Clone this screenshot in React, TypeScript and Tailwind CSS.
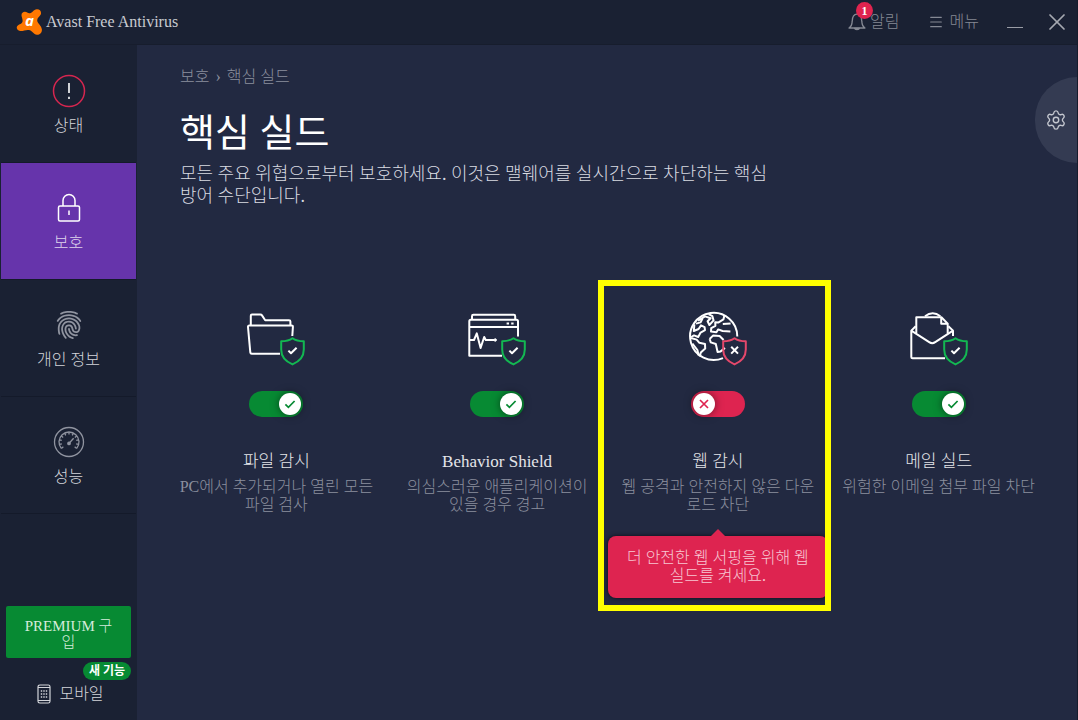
import { useState } from "react"
import type { ReactNode } from "react"
import { Menu, Settings, X } from "lucide-react"
import { IoFingerPrint } from "react-icons/io5"

type IconName = "folder" | "behavior" | "globe" | "mail"

const shields: { title: string; description: string; icon: IconName; on: boolean; alert?: string }[] = [
  { title: "파일 감시", description: "PC에서 추가되거나 열린 모든 파일 검사", icon: "folder", on: true },
  { title: "Behavior Shield", description: "의심스러운 애플리케이션이 있을 경우 경고", icon: "behavior", on: true },
  {
    title: "웹 감시",
    description: "웹 공격과 안전하지 않은 다운로드 차단",
    icon: "globe",
    on: false,
    alert: "더 안전한 웹 서핑을 위해 웹 실드를 켜세요.",
  },
  { title: "메일 실드", description: "위험한 이메일 첨부 파일 차단", icon: "mail", on: true },
]

function Logo() {
  return (
    <svg width="26" height="28" viewBox="0 0 26 28" aria-hidden="true">
      <path
        fill="#ff7800"
        d="M8.8 3.8C10.8 3.7 12 5.6 14 5.2C16.4 4.8 17.4 1.6 20.8 1.2C24 .9 26 4 24.6 6.8C23.6 8.8 21.3 9.6 21.2 12.2C21.1 15.4 25.6 17.6 25.9 21.6C26.1 24.8 23.6 27 20.9 26.8C17.4 26.5 16.6 22.6 12.8 22C9.4 21.6 6.5 23.6 3.4 22.8C.6 22-.1 18.9 1.8 17.4C3.6 16 5.6 16.2 6.4 14C7.2 11.6 5.4 9.2 5.5 6.9C5.6 5.1 7 3.9 8.8 3.8Z"
      />
      <text x="13.4" y="18" textAnchor="middle" fill="#fff" className="font-['Open_Sans'] text-[15px] font-bold italic">a</text>
    </svg>
  )
}

function Bell() {
  return (
    <svg width="18" height="18" viewBox="0 0 18 18" fill="none" stroke="currentColor" strokeWidth="1.3" aria-hidden="true">
      <path d="M1 15C3.4 13.6 4 12 4.2 8.4C4.3 4 6 1.2 9 1.2S13.7 4 13.8 8.4C14 12 14.6 13.6 17 15Z" strokeLinejoin="round" />
      <path d="M6.6 15.3C7 17 11 17 11.4 15.3Z" fill="currentColor" />
    </svg>
  )
}

function StatusIcon() {
  return (
    <svg width="34" height="34" viewBox="0 0 34 34" fill="none" aria-hidden="true">
      <circle cx="17" cy="17" r="15.5" stroke="#d6264f" strokeWidth="1.5" />
      <path d="M17 9V19M17 22.8V25" stroke="#fff" strokeWidth="1.6" />
    </svg>
  )
}

function LockIcon() {
  return (
    <svg width="34" height="34" viewBox="0 0 34 34" fill="none" stroke="#fff" strokeWidth="1.5" aria-hidden="true">
      <rect x="6.5" y="15" width="21" height="15" rx="1.5" />
      <path d="M11 15V9.5a6 6 0 0 1 12 0V15M17 19.5V24" />
    </svg>
  )
}

const ticks = [-130, -104, -78, -52, -26, 0, 26, 52, 78, 104, 130]

function GaugeIcon() {
  return (
    <svg width="34" height="34" viewBox="0 0 34 34" fill="none" stroke="#9094a0" strokeWidth="1.3" aria-hidden="true">
      <circle cx="17" cy="17" r="14.5" />
      <path d="M9.3 23.4A10 10 0 1 1 24.7 23.4" />
      {ticks.map((deg) => (
        <path key={deg} d="M17 7V9.6" transform={`rotate(${deg} 17 17)`} />
      ))}
      <path d="M17.6 17.8L21.6 13.2" />
      <circle cx="17" cy="18.4" r="1.2" fill="#9094a0" />
    </svg>
  )
}

function PhoneIcon() {
  return (
    <svg width="14" height="20" viewBox="0 0 14 20" fill="none" stroke="#d3d5da" strokeWidth="1.2" aria-hidden="true">
      <rect x="1" y="1" width="12" height="18" rx="1.8" />
      <path d="M1 3.5H13M1 16.5H13" />
      <path d="M3.8 7H10.4M3.8 10H10.4M3.8 13H10.4" strokeWidth="1.5" strokeDasharray="1.4 1.1" />
    </svg>
  )
}

const drawings: Record<IconName, ReactNode> = {
  folder: (
    <>
      <path d="M4.8 14V4.8Q4.8 3.5 6 3.5H14.4Q15.4 3.5 16 4.4L19.2 9.2H43Q44.4 9.2 44.4 10.6V14" />
      <path d="M34 42.7H5.8Q4.4 42.7 4.3 41.4L2 16Q1.9 14.4 3.4 14.4H45.4Q47 14.4 46.9 16L46.3 25" />
    </>
  ),
  behavior: (
    <>
      <path d="M5 8.5V5.2Q5 3.8 6.4 3.8H46.8Q48.2 3.8 48.2 5.2V8.5" />
      <path d="M35 44.7H2.3V10.2Q2.3 8.7 3.8 8.7H49.5Q51 8.7 51 10.2V25.5M2.3 16H51" />
      <path d="M3 29H7L9.8 22.4L13.6 37L17.2 26L18.8 29H27" />
      <circle cx="28.2" cy="29" r="1.2" fill="#fff" strokeWidth="1" />
      <path d="M39.6 12.6h2.4M44.2 12.6h2.4" />
    </>
  ),
  globe: (
    <>
      <path d="M35 47.1A23.6 23.6 0 1 1 49.3 25.5" />
      <path d="M8 12.6L12.6 11.4L14.6 7.4M10 9.6L17 5.4L22.6 7.2L19.6 10.2L21.4 14L25.6 9.4L24.4 5.2L20.6 3.2" />
      <path d="M6.4 13.4L5.8 20L10.6 18L13 14.4L16.6 16.2L17 19.2L12.6 21.6L10.2 26L6 24.4L3.2 26" />
      <path d="M3 27L8.6 28.6L11.4 31.8L17 33L17.2 37.6L12.8 41.6L11.8 45.6M4.4 32.6L9.4 39L10.6 44.4" />
      <path d="M36.4 4.4L35.4 8.4L30.6 11.4L27.2 11.2L27.4 14.8L23.2 17.2L23 20.6L28.4 21.2L30.2 18.4L34.6 20L42.4 20.4M34.8 13L42.6 12.6" />
      <path d="M21.6 28L25 24.6L31.6 25L35.6 29M21.6 28L22.8 31.4L27.8 33L29.6 41L32.6 40.4L37 37" />
    </>
  ),
  mail: (
    <>
      <path d="M7.3 22V6.3H32.4L38.7 12.6V22.5M32.2 6.8V12.8H38.4" />
      <path d="M16 5.2Q23.7-.6 31.4 5.2M6.7 15.2L2.3 19.6M39.4 15.2L44 19.6" />
      <path d="M36 47.3H3.6Q2.3 47.3 2.3 46V19.7L20.2 31.2Q23.2 33.2 26.2 31.2L44 19.7V25" />
    </>
  ),
}

function ShieldIcon({ name, on }: { name: IconName; on: boolean }) {
  return (
    <svg width="60" height="56" viewBox="0 0 60 56" fill="none" stroke="#fff" strokeWidth="2" strokeLinejoin="round" aria-hidden="true">
      {drawings[name]}
      <path
        d="M46.5 27.2C43.4 29.4 39.4 30.2 35.2 30.2V38.6C35.2 46 39.6 50.6 46.5 53.4C53.4 50.6 57.8 46 57.8 38.6V30.2C53.6 30.2 49.6 29.4 46.5 27.2Z"
        stroke={on ? "#13b852" : "#e5486b"}
        strokeWidth="2"
      />
      {on ? <path d="M42.4 39.6L45 42.2L50.6 36.8" /> : <path d="M43.2 35.8L50 42.6M50 35.8L43.2 42.6" />}
    </svg>
  )
}

function Toggle({ label, defaultOn }: { label: string; defaultOn: boolean }) {
  const [on, setOn] = useState(defaultOn)
  return (
    <label className="relative block h-[26px] w-[54px] cursor-pointer">
      <input
        type="checkbox"
        role="switch"
        aria-label={label}
        checked={on}
        onChange={() => setOn(!on)}
        className="block h-full w-full cursor-pointer appearance-none rounded-full bg-[#de2450] checked:bg-[#078a33]"
      />
      <span
        className={`pointer-events-none absolute top-0.5 flex size-[22px] items-center justify-center rounded-full bg-white shadow-[0_0_8px_rgba(0,0,0,0.5)] ${on ? "right-0.5" : "left-0.5"}`}
      >
        <svg width="12" height="12" viewBox="0 0 12 12" fill="none" strokeWidth="1.7" aria-hidden="true">
          {on ? <path d="M1.4 6.4L4.4 9.4L10.6 3" stroke="#078a33" /> : <path d="M2 2L10 10M10 2L2 10" stroke="#de2450" />}
        </svg>
      </span>
    </label>
  )
}

function ShieldCard({ title, description, icon, on, alert }: (typeof shields)[number]) {
  return (
    <section className="relative flex flex-col items-center px-3 pt-[31px] text-center">
      <ShieldIcon name={icon} on={on} />
      <div className="mt-6">
        <Toggle label={title} defaultOn={on} />
      </div>
      <h2 className="mt-[33px] text-[17px] leading-6 text-[#e4e5e9]">{title}</h2>
      <p className="mt-1 text-base leading-[18px] text-[#8b8f9e]">{description}</p>
      {alert && (
        <>
          <div className="relative mt-[22px] w-[220px] rounded-lg bg-[#de2450] px-3 py-[13px] text-base leading-[18px] text-[#f7c6d2] shadow-[0_0_4px_rgba(0,0,0,0.7)]">
            <span className="absolute -top-[7px] left-1/2 size-0 -translate-x-1/2 border-x-8 border-b-8 border-x-transparent border-b-[#de2450]" />
            {alert}
          </div>
          <div className="pointer-events-none absolute top-0 right-[-3px] -bottom-[13px] left-[-10px] border-6 border-[#ffff00]" />
        </>
      )}
    </section>
  )
}

function NavItem({ label, active, children }: { label: string; active?: boolean; children: ReactNode }) {
  return (
    <a
      href="#"
      className={`flex h-[117px] flex-col items-center justify-center gap-1.5 border-b border-[#141a2a] pt-1 text-base leading-6 ${active ? "bg-[#6634ab] text-[#ded3ec]" : "text-[#d3d5da]"}`}
    >
      <span className="flex h-[34px] items-center">{children}</span>
      {label}
    </a>
  )
}

export default function App() {
  return (
    <div className="flex min-h-screen flex-col border-r border-[#161c2c] bg-[#222941] font-['Liberation_Serif','Noto_Sans_CJK_KR',serif] font-light">
      <header className="flex h-[45px] shrink-0 items-center border-b border-[#171d2d] bg-[#1a2133] pr-1.5 pl-4 text-base text-[#858994]">
        <Logo />
        <span className="ml-1 text-[#c9cbd1]">Avast Free Antivirus</span>
        <button className="relative ml-auto flex items-center gap-1">
          <Bell />
          알림
          <span className="absolute -top-2 left-2 flex size-[17px] items-center justify-center rounded-full bg-[#e0244f] text-xs font-bold text-white">1</span>
        </button>
        <button className="ml-7 flex items-center gap-1.5">
          <Menu size={16} strokeWidth={1.7} />
          메뉴
        </button>
        <button aria-label="최소화" className="ml-7 flex h-5 w-4 items-end pb-1">
          <span className="h-px w-full bg-[#9a9da6]" />
        </button>
        <button aria-label="닫기" className="ml-5 text-[#a5a8b0]">
          <X size={28} strokeWidth={1.5} />
        </button>
      </header>

      <div className="flex flex-1">
        <aside className="flex w-[137px] shrink-0 flex-col bg-[#1a2133]">
          <nav className="px-px pt-px">
            <NavItem label="상태">
              <StatusIcon />
            </NavItem>
            <NavItem label="보호" active>
              <LockIcon />
            </NavItem>
            <NavItem label="개인 정보">
              <IoFingerPrint size={30} color="#9094a0" />
            </NavItem>
            <NavItem label="성능">
              <GaugeIcon />
            </NavItem>
          </nav>
          <div className="mt-auto flex flex-col px-1.5 pb-3.5">
            <button className="rounded-xs bg-[#078a33] px-3 pt-3 pb-2 text-[15px] leading-4 text-[#d5ecdc]">PREMIUM 구입</button>
            <span className="mt-1 self-end rounded-full bg-[#078a33] px-1.5 text-xs leading-[18px] font-bold text-white">새 기능</span>
            <a href="#" className="mt-0.5 flex items-center justify-center gap-2 pl-1 text-base leading-6 text-[#d3d5da]">
              <PhoneIcon />
              모바일
            </a>
          </div>
        </aside>

        <main className="relative min-w-0 flex-1 pt-5 pr-7 pl-[29px]">
          <div className="px-3.5">
            <p className="text-base leading-6 text-[#8b8f9e]">
              보호<span className="mx-1.5">›</span>핵심 실드
            </p>
            <h1 className="mt-[22px] text-[38px] leading-11 font-normal text-white">핵심 실드</h1>
            <p className="mt-2 max-w-[600px] text-lg leading-[22px] text-[#d9dbe1]">
              모든 주요 위협으로부터 보호하세요. 이것은 맬웨어를 실시간으로 차단하는 핵심 방어 수단입니다.
            </p>
          </div>
          <button aria-label="설정" className="absolute top-8 right-0 flex h-[86px] w-[42px] items-center rounded-l-full bg-[#343b52] pl-2.5 text-[#c4c7cf]">
            <Settings size={22} strokeWidth={1.5} />
          </button>
          <div className="mt-[73px] grid grid-cols-4 items-start">
            {shields.map((shield) => (
              <ShieldCard key={shield.title} {...shield} />
            ))}
          </div>
        </main>
      </div>
    </div>
  )
}
